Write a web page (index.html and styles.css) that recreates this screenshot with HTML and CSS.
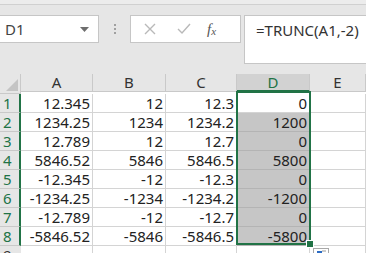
FILE: index.html
```html
<html>
<head>
<title>TRUNC</title>
<link rel="stylesheet" href="styles.css">
</head>
<body>
<div class="ribbon-edge"></div>
<div class="formula-bar">
  <div class="name-box">
    <span>D1</span>
    <svg class="drop" width="9" height="5" viewBox="0 0 9 5"><path d="M0 0h9L4.5 5z" fill="#6e6e6e"/></svg>
  </div>
  <div class="grip"><i></i><i></i><i></i></div>
  <div class="fx-buttons">
    <svg width="14" height="14" viewBox="0 0 14 14"><path d="M2 2l10 10M12 2L2 12" stroke="#b9b9b9" stroke-width="1.4"/></svg>
    <svg width="14" height="14" viewBox="0 0 14 14"><path d="M1 7l4 4 8-9" stroke="#b9b9b9" stroke-width="1.4" fill="none"/></svg>
    <span class="fx">f<sub>x</sub></span>
  </div>
  <div class="formula">=TRUNC(A1,-2)</div>
</div>

<div class="sheet">
  <div class="grid">
    <div class="corner"><svg width="12" height="12" viewBox="0 0 12 12"><path d="M12 0v12H0z" fill="#c4c4c4"/></svg></div>
    <div class="col-head">A</div>
    <div class="col-head">B</div>
    <div class="col-head">C</div>
    <div class="col-head sel">D</div>
    <div class="col-head">E</div>
  </div>
  <div id="rows"></div>
  <div class="selection"><div class="handle"></div></div>
  <div class="quick"><svg width="14" height="8" viewBox="0 0 14 8"><rect x="3" y="2" width="5" height="6" fill="#2b6cc4"/><path d="M8 2h4M8 5h4" stroke="#9a9a9a"/></svg></div>
</div>

<script>
  const data = [
    ['12.345', '12', '12.3', '0'],
    ['1234.25', '1234', '1234.2', '1200'],
    ['12.789', '12', '12.7', '0'],
    ['5846.52', '5846', '5846.5', '5800'],
    ['-12.345', '-12', '-12.3', '0'],
    ['-1234.25', '-1234', '-1234.2', '-1200'],
    ['-12.789', '-12', '-12.7', '0'],
    ['-5846.52', '-5846', '-5846.5', '-5800'],
    ['', '', '', '']
  ];
  const rows = document.getElementById('rows');
  data.forEach((r, i) => {
    let html = '<div class="row-head' + (i < 8 ? ' on' : '') + '">' + (i + 1) + '</div>';
    r.forEach((v, j) => {
      let cls = 'cell';
      if (j === 3 && i > 0 && i < 8) cls += ' shade';
      html += '<div class="' + cls + '">' + v + '</div>';
    });
    html += '<div class="cell"></div>';
    rows.innerHTML += '<div class="grid row">' + html + '</div>';
  });
</script>
</body>
</html>
```
FILE: styles.css
```css
body {
  margin: 0;
  background: #e6e6e6;
  font-family: "Noto Sans", "Liberation Sans", sans-serif;
  color: #222;
  overflow: hidden;
}
.ribbon-edge {
  height: 4px;
  border-bottom: 1px solid #d0d0d0;
  background: #ececec;
}
.formula-bar {
  display: flex;
  align-items: flex-start;
  padding-top: 10px;
  height: 59px;
}
.name-box {
  height: 28px;
  background: #fff;
  border: 1px solid #c6c6c6;
  border-left: none;
  display: flex;
  align-items: center;
  justify-content: space-between;
  padding: 0 9px 0 5px;
  box-sizing: border-box;
  width: 99px;
  font-size: 15px;
  color: #444;
}
.grip {
  width: 31px;
  height: 28px;
  display: flex;
  flex-direction: column;
  align-items: center;
  justify-content: center;
  gap: 2px;
}
.grip i {
  width: 2px;
  height: 2px;
  background: #a0a0a0;
}
.fx-buttons {
  width: 111px;
  height: 28px;
  box-sizing: border-box;
  background: #fff;
  border: 1px solid #c6c6c6;
  display: flex;
  align-items: center;
  padding-left: 12px;
  gap: 20px;
}
.fx {
  font-family: "Liberation Serif", serif;
  font-style: italic;
  font-size: 15px;
  color: #555;
  margin-left: -4px;
}
.fx sub {
  font-size: 11px;
  vertical-align: -1px;
}
.formula {
  flex: 1;
  margin-left: 3px;
  height: 49px;
  box-sizing: border-box;
  background: #fff;
  border: 1px solid #c6c6c6;
  border-right: none;
  padding: 4px 0 0 11px;
  font-size: 15px;
  color: #333;
}
.sheet {
  position: relative;
  background: #fff;
}
.grid {
  display: grid;
  grid-template-columns: 21px 72px 73px 71px 73px 1fr;
}
.corner, .col-head {
  height: 17px;
  background: #e6e6e6;
  border-right: 1px solid #c9c9c9;
  border-bottom: 1px solid #c9c9c9;
  text-align: center;
  font-size: 15px;
  line-height: 17px;
  color: #333;
}
.corner {
  display: flex;
  align-items: flex-end;
  justify-content: flex-end;
  padding: 0 2px 2px 0;
}
.col-head.sel {
  background: #d2d2d2;
  color: #217346;
  border-bottom: 2px solid #217346;
  height: 16px;
}
.row {
  height: 19px;
}
.row-head {
  background: #e6e6e6;
  border-bottom: 1px solid #c9c9c9;
  font-size: 15px;
  line-height: 18px;
  padding-left: 3px;
  color: #333;
}
.row-head.on {
  color: #217346;
  border-right: 2px solid #217346;
}
.cell {
  border-right: 1px solid #d4d4d4;
  border-bottom: 1px solid #d4d4d4;
  text-align: right;
  padding-right: 2px;
  font-size: 15px;
  line-height: 18px;
  white-space: nowrap;
}
.cell.shade {
  background: #c6c6c6;
  border-bottom-color: #b4b4b4;
}
.selection {
  position: absolute;
  left: 236px;
  top: 17px;
  width: 71px;
  height: 150px;
  border: 2px solid #217346;
}
.handle {
  position: absolute;
  right: -5px;
  bottom: -5px;
  width: 6px;
  height: 6px;
  background: #217346;
  border: 1px solid #fff;
}
.quick {
  position: absolute;
  left: 313px;
  top: 174px;
  width: 14px;
  height: 12px;
  border: 1px solid #a8a8a8;
  background: #fff;
}
.quick svg {
  display: block;
}
```
